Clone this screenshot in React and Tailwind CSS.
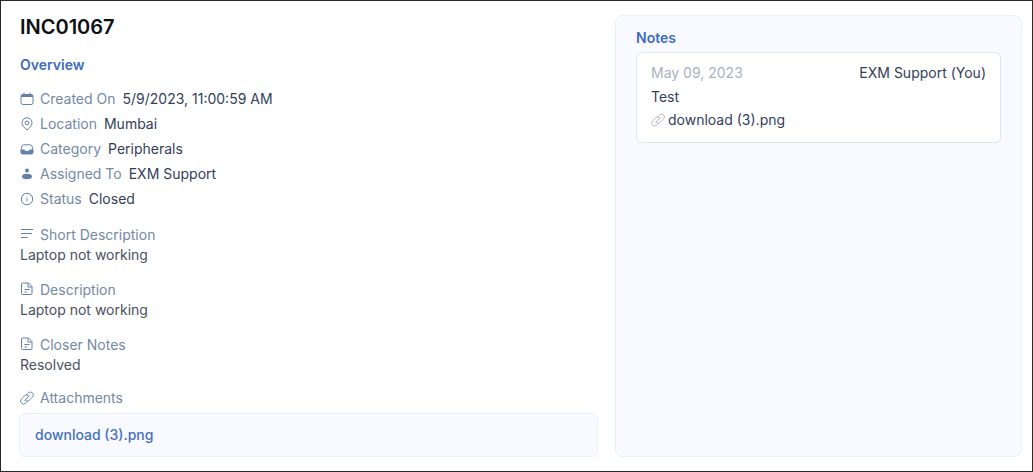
const ICONS = {
  calendar: (
    <>
      <rect x="1" y="2.500" width="12" height="10" rx="1.800" fill="none" stroke="currentColor" />
      <path d="M1 4.300A1.800 1.800 0 0 1 2.800 2.500h8.400a1.800 1.800 0 0 1 1.800 1.800V5H1z" fill="currentColor" />
      <path d="M4 1v2M10 1v2" stroke="currentColor" strokeLinecap="round" />
    </>
  ),
  pin: (
    <g fill="none" stroke="currentColor">
      <path d="M7 13C4.600 11 2 8.700 2 5.800a5 5 0 0 1 10 0C12 8.700 9.400 11 7 13z" />
      <circle cx="7" cy="6" r="1.900" />
    </g>
  ),
  inbox: (
    <>
      <path d="M3.600 2.800h6.800a1.500 1.500 0 0 1 1.400 1L13 7.500v3a1.500 1.500 0 0 1-1.500 1.500h-9A1.500 1.500 0 0 1 1 10.500v-3l1.200-3.700a1.500 1.500 0 0 1 1.400-1z" fill="none" stroke="currentColor" strokeLinejoin="round" />
      <path d="M1 7.500h3.200c.5 0 .6 1.500 1.600 1.500h2.400c1 0 1.100-1.500 1.600-1.500H13v3a1.500 1.500 0 0 1-1.500 1.500h-9A1.500 1.500 0 0 1 1 10.500z" fill="currentColor" />
    </>
  ),
  person: (
    <g fill="currentColor">
      <circle cx="7" cy="3.500" r="2" />
      <ellipse cx="7" cy="9.500" rx="5" ry="2.800" />
    </g>
  ),
  info: (
    <>
      <circle cx="7" cy="7" r="5.700" fill="none" stroke="currentColor" />
      <path d="M7 6.300v3" stroke="currentColor" />
      <circle cx="7" cy="5" r="0.500" fill="currentColor" />
    </>
  ),
  lines: <path d="M1 2.500h12M1 6.500h11M1 10.500h6.500" fill="none" stroke="currentColor" />,
  file: (
    <g fill="none" stroke="currentColor" strokeLinejoin="round">
      <path d="M2.500 1h6L12 4.500v7a1 1 0 0 1-1 1H2.500a1 1 0 0 1-1-1V2a1 1 0 0 1 1-1z" />
      <path d="M8 1v4h4M4.500 7.500h5M4.500 10h2.500" />
    </g>
  ),
  clip: (
    <path
      d="M4.700 9.200 9 5.300M6 4 8.500 1.900a2.900 2.900 0 0 1 4 4.200L9.300 9.200a2.700 2.700 0 0 1-3.900.2M8 10l-2.400 2.100a2.900 2.900 0 0 1-4.100-4.200l3.200-3.100a2.700 2.700 0 0 1 4.300.5"
      fill="none"
      stroke="currentColor"
      strokeLinecap="round"
      strokeWidth="0.900"
    />
  ),
};

function Icon({ name, className = "" }) {
  return (
    <svg viewBox="0 0 14 14" className={`size-3.5 shrink-0 ${className}`} aria-hidden="true">
      {ICONS[name]}
    </svg>
  );
}

const FIELDS = [
  { icon: "calendar", label: "Created On", value: "5/9/2023, 11:00:59 AM" },
  { icon: "pin", label: "Location", value: "Mumbai" },
  { icon: "inbox", label: "Category", value: "Peripherals" },
  { icon: "person", label: "Assigned To", value: "EXM Support" },
  { icon: "info", label: "Status", value: "Closed" },
];

const SECTIONS = [
  { icon: "lines", label: "Short Description", value: "Laptop not working" },
  { icon: "file", label: "Description", value: "Laptop not working" },
  { icon: "file", label: "Closer Notes", value: "Resolved" },
];

export default function App() {
  return (
    <main className="grid grid-cols-[579fr_407fr] gap-[17px] border border-[#2a2a2a] bg-white pt-3 pr-2.5 pb-3.5 pl-[18px] font-['Inter',sans-serif] text-sm leading-5 text-[#33405a]">
      <section className="min-w-0">
        <div className="pl-px">
          <h1 className="text-xl leading-7 font-semibold text-[#0c0f16]">INC01067</h1>
          <h2 className="mt-3.5 font-semibold text-[#3e6bbd]">Overview</h2>
          <dl className="mt-3.5 flex flex-col gap-[5px]">
            {FIELDS.map((field) => (
              <div key={field.label} className="flex items-center">
                <Icon name={field.icon} className="text-[#6580a8]" />
                <dt className="ml-1.5 text-[#7389a5]">{field.label}</dt>
                <dd className="ml-[7px]">{field.value}</dd>
              </div>
            ))}
          </dl>
          <dl className="mt-4 flex flex-col gap-[15px]">
            {SECTIONS.map((item) => (
              <div key={item.label}>
                <dt className="flex items-start gap-1.5 text-[#7389a5]">
                  <Icon name={item.icon} className="mt-0.5 text-[#6580a8]" />
                  {item.label}
                </dt>
                <dd className="text-[#4a5160]">{item.value}</dd>
              </div>
            ))}
          </dl>
          <h3 className="mt-[13px] flex items-center gap-1.5 text-[#7389a5]">
            <Icon name="clip" className="text-[#6580a8]" />
            Attachments
          </h3>
        </div>
        <div className="mt-[5px] flex rounded-md border border-[#eaf0f9] bg-[#f8faff] px-[15px] py-[11px]">
          <a href="#attachment" className="font-medium text-[#4670bd]">
            download (3).png
          </a>
        </div>
      </section>
      <aside className="mt-0.5 min-w-0 rounded-lg border border-[#eaf0f9] bg-[#f8faff] px-5 pt-3">
        <h2 className="font-semibold text-[#3e6bbd]">Notes</h2>
        <article className="mt-1 rounded-md border border-[#dce7f6] bg-white px-3.5 pt-2.5 pb-3">
          <header className="flex justify-between">
            <time dateTime="2023-05-09" className="text-[#a9b3c2]">
              May 09, 2023
            </time>
            <span>EXM Support (You)</span>
          </header>
          <p className="mt-1">Test</p>
          <a href="#note-attachment" className="mt-[3px] flex items-center gap-[3px]">
            <Icon name="clip" className="text-[#a9b3c2]" />
            download (3).png
          </a>
        </article>
      </aside>
    </main>
  );
}
